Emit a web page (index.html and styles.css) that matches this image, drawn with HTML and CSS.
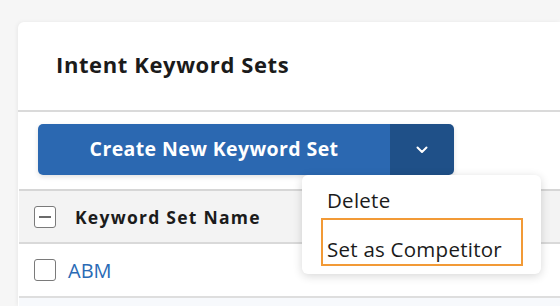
FILE: index.html
```html
<!DOCTYPE html>
<html lang="en">
<head>
  <meta charset="UTF-8" />
  <title>Intent Keyword Sets</title>
  <link rel="stylesheet" href="styles.css">
</head>
<body>

<div class="card">
  <div class="card-header">
    <h1 class="card-title">Intent Keyword Sets</h1>
  </div>

  <div class="toolbar">
    <div class="split-button">
      <button class="btn-main">Create New Keyword Set</button>
      <button class="btn-toggle" aria-label="More actions">
        <svg width="12" height="8" viewBox="0 0 12 8">
          <path d="M1.5 1.5 L6 6 L10.5 1.5" fill="none" stroke="#fff" stroke-width="2" stroke-linecap="round" stroke-linejoin="round"/>
        </svg>
      </button>

      <div class="menu">
        <div class="menu-item">Delete</div>
        <div class="menu-item focused">Set as Competitor</div>
      </div>
    </div>
  </div>

  <div class="table">
    <div class="row head">
      <span class="checkbox partial"></span>
      <span class="col-name">Keyword Set Name</span>
    </div>
    <div class="row">
      <span class="checkbox"></span>
      <a class="set-link" href="#">ABM</a>
    </div>
    <div class="row alt"></div>
  </div>
</div>

</body>
</html>
```

FILE: styles.css
```css
* {
  box-sizing: border-box;
}

html, body {
  height: 100%;
}

body {
  margin: 0;
  padding: 22px 0 0 18px;
  background: #f6f6f6;
  font-family: "Open Sans", "Lato", sans-serif;
  color: #1b1b1b;
  overflow: hidden;
}

.card {
  height: 100%;
  overflow: hidden;
  background: #fff;
  border-radius: 6px 0 0 0;
  box-shadow: -1px 0 4px rgba(0, 0, 0, 0.06);
}

.card-header {
  height: 90px;
  display: flex;
  align-items: center;
  padding: 0 0 4px 38px;
  border-bottom: 2px solid #dadada;
}

.card-title {
  margin: 0;
  font-size: 22px;
  font-weight: 700;
  letter-spacing: 0.6px;
}

.toolbar {
  padding: 12px 0 14px 20px;
}

.split-button {
  position: relative;
  display: inline-flex;
  height: 51px;
  border-radius: 5px;
  box-shadow: 0 2px 5px rgba(0, 0, 0, 0.12);
}

.split-button button {
  border: none;
  color: #fff;
  font-family: inherit;
  cursor: pointer;
}

.btn-main {
  width: 352px;
  background: #2b68b1;
  border-radius: 5px 0 0 5px;
  font-size: 19.5px;
  font-weight: 700;
  letter-spacing: 0.4px;
  padding: 0 0 2px;
}

.btn-toggle {
  width: 64px;
  background: #1f5088;
  border-radius: 0 5px 5px 0;
  display: flex;
  align-items: center;
  justify-content: center;
}

.menu {
  position: absolute;
  top: 51px;
  left: 264px;
  width: 239px;
  padding: 6px 18px 8px 19px;
  background: #fff;
  border-radius: 6px;
  box-shadow: 0 2px 10px rgba(0, 0, 0, 0.16);
  z-index: 2;
}

.menu-item {
  font-size: 20.5px;
  letter-spacing: 0.25px;
  padding: 0 4px;
  border: 2px solid transparent;
  height: 37px;
  display: flex;
  align-items: center;
}

.menu-item.focused {
  border: 2.5px solid #f29a36;
  height: 48px;
  align-items: flex-end;
  padding-bottom: 1px;
}

.table {
  margin-left: 1px;
  border-top: 2px solid #d6d6d6;
}

.row {
  height: 54px;
  display: flex;
  align-items: center;
  padding-left: 15px;
  border-bottom: 2px solid #dedede;
}

.row.head {
  height: 53px;
  background: #f3f3f3;
  border-bottom: 2px solid #d9d9d9;
}

.row.alt {
  background: #f7f9fc;
}

.checkbox {
  width: 22px;
  height: 22px;
  border: 1.5px solid #7a7a7a;
  border-radius: 3px;
  background: #fff;
  display: flex;
  align-items: center;
  justify-content: center;
}

.checkbox.partial::after {
  content: "";
  width: 12px;
  height: 2px;
  background: #6b6b6b;
}

.col-name {
  margin-left: 19px;
  font-size: 17.5px;
  font-weight: 700;
  letter-spacing: 1.25px;
}

.set-link {
  margin-left: 12px;
  font-size: 20px;
  color: #2a6ab5;
  text-decoration: none;
}
```
